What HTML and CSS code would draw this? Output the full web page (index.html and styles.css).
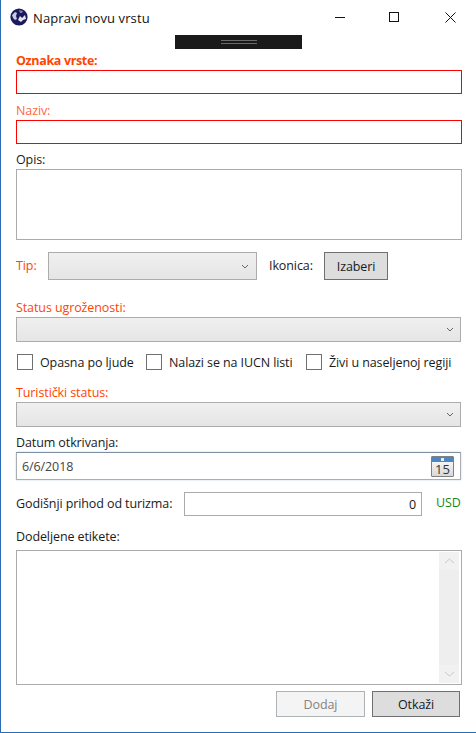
FILE: index.html
```html
<!DOCTYPE html>
<html>
<head lang="en">
    <meta charset="UTF-8">
    <title>Napravi novu vrstu</title>
    <link rel="stylesheet" href="styles.css">
</head>
<body>
<div id="window">
    <div id="titlebar">
        <svg class="app-icon" width="18" height="18" viewBox="0 0 18 18">
            <circle cx="9" cy="9" r="8.6" fill="#1b1a5e"/>
            <path d="M2 7 L5 4 L7 5 L6 8 L7 11 L5 12 L3 10 Z" fill="#c9c9e0"/>
            <path d="M8 12 L10 8 L12 10 L15 7 L16 11 L13 12 L11 14 Z" fill="#e6e6f2"/>
            <path d="M9 2 L13 3 L12 5 L10 5 Z" fill="#7f7fb5"/>
        </svg>
        <span class="title">Napravi novu vrstu</span>
        <div class="win-buttons">
            <svg class="w-min" width="11" height="11" viewBox="0 0 11 11"><path d="M0 5.5 H10" stroke="#111" fill="none"/></svg>
            <svg class="w-max" width="11" height="11" viewBox="0 0 11 11"><rect x="0.5" y="0.5" width="9" height="9" stroke="#111" fill="none"/></svg>
            <svg width="11" height="11" viewBox="0 0 11 11"><path d="M0.5 0.5 L10.5 10.5 M10.5 0.5 L0.5 10.5" stroke="#111" fill="none"/></svg>
        </div>
    </div>
    <div id="grip"><span class="grip-lines"></span></div>
    <div id="form">
        <label class="lbl req strong lbl-first">Oznaka vrste:</label>
        <input class="field invalid" type="text">
        <label class="lbl faded">Naziv:</label>
        <input class="field invalid" type="text">
        <label class="lbl opis-lbl">Opis:</label>
        <textarea class="field opis"></textarea>

        <div class="row tip-row">
            <label class="lbl-inline req tip-lbl">Tip:</label>
            <div class="combo tip-combo"><svg class="chev" width="8" height="5" viewBox="0 0 8 5"><path d="M1 1 L4 4 L7 1" stroke="#666" fill="none"/></svg></div>
            <label class="lbl-inline ikonica">Ikonica:</label>
            <button class="btn izaberi">Izaberi</button>
        </div>

        <label class="lbl req status-lbl">Status ugroženosti:</label>
        <div class="combo wide"><svg class="chev" width="8" height="5" viewBox="0 0 8 5"><path d="M1 1 L4 4 L7 1" stroke="#666" fill="none"/></svg></div>

        <div class="row checks">
            <span class="check"></span><span class="check-text c1">Opasna po ljude</span>
            <span class="check"></span><span class="check-text c2">Nalazi se na IUCN listi</span>
            <span class="check"></span><span class="check-text">Živi u naseljenoj regiji</span>
        </div>

        <label class="lbl req tur-lbl">Turistički status:</label>
        <div class="combo wide"><svg class="chev" width="8" height="5" viewBox="0 0 8 5"><path d="M1 1 L4 4 L7 1" stroke="#666" fill="none"/></svg></div>

        <label class="lbl datum-lbl">Datum otkrivanja:</label>
        <div class="datepicker">
            <span class="date-val">6/6/2018</span>
            <div class="cal">
                <div class="cal-top"><span class="cal-dot"></span></div>
                <div class="cal-num">15</div>
            </div>
        </div>

        <div class="row prihod">
            <label class="lbl-inline">Godišnji prihod od turizma:</label>
            <div class="num-field">0</div>
            <span class="usd">USD</span>
        </div>

        <label class="lbl etikete-lbl">Dodeljene etikete:</label>
        <div class="listbox">
            <div class="scrollbar">
                <div class="sb-arrow"><svg width="11" height="6" viewBox="0 0 11 6"><path d="M1 5 L5.5 1 L10 5" stroke="#c8c8c8" fill="none"/></svg></div>
                <div class="sb-arrow"><svg width="11" height="6" viewBox="0 0 11 6"><path d="M1 1 L5.5 5 L10 1" stroke="#c8c8c8" fill="none"/></svg></div>
            </div>
        </div>

        <div class="row actions">
            <button class="btn action disabled">Dodaj</button>
            <button class="btn action cancel">Otkaži</button>
        </div>
    </div>
</div>
</body>
</html>
```

FILE: styles.css
```css
*{
    margin: 0;
    padding: 0;
    box-sizing: border-box;
}
html, body{
    background: #fff;
}
body{
    width: 476px;
    height: 733px;
    overflow: hidden;
    font-family: "Open Sans", "Noto Sans", sans-serif;
    font-size: 12.5px;
    letter-spacing: -0.1px;
    color: #1a1a1a;
}
#window{
    height: 733px;
    border-left: 1px solid #2a6db5;
    border-bottom: 1px solid #2a6db5;
    background: #fff;
}
#titlebar{
    height: 35px;
    display: flex;
    align-items: center;
    padding-left: 9px;
}
.app-icon{
    margin-right: 5px;
    margin-bottom: 1px;
}
.title{
    font-size: 13px;
    letter-spacing: 0.1px;
    color: #111;
}
.win-buttons{
    margin-left: auto;
    display: flex;
    padding-right: 20px;
}
.w-min{
    margin-right: 43px;
}
.w-max{
    margin-right: 45px;
}
#grip{
    width: 127px;
    height: 14px;
    margin-left: 174px;
    background: #1a1a1a;
    display: flex;
    align-items: center;
    justify-content: center;
}
.grip-lines{
    width: 36px;
    height: 4px;
    border-top: 1px solid #6a6a6a;
    border-bottom: 1px solid #6a6a6a;
}
#form{
    padding-left: 15px;
    width: 461px;
    display: flex;
    flex-direction: column;
}
.lbl{
    display: block;
    height: 16px;
    line-height: 16px;
    margin-top: 3px;
    margin-bottom: 1px;
}
.lbl-first{
    margin-top: 4px;
}
.opis-lbl{
    margin-top: 2px;
}
.req{
    color: #ff4500;
}
.strong{
    font-weight: 700;
    letter-spacing: -0.35px;
}
.faded{
    color: #ff6545;
}
.field{
    display: block;
    width: 446px;
    height: 24px;
    border: 1px solid #ababab;
    background: #fff;
    outline: none;
    resize: none;
    margin-bottom: 6px;
}
.invalid{
    border-color: #ff0000;
}
.opis{
    height: 71px;
    margin-bottom: 12px;
}
.row{
    display: flex;
    align-items: center;
}
.tip-row{
    height: 28px;
}
.tip-lbl{
    width: 32px;
}
.lbl-inline{
    line-height: 16px;
}
.combo{
    height: 25px;
    border: 1px solid #acacac;
    background: linear-gradient(#f0f0f0, #e5e5e5);
    display: flex;
    align-items: center;
    justify-content: flex-end;
    padding-right: 6px;
}
.tip-combo{
    width: 209px;
    height: 28px;
    padding-right: 7px;
}
.wide{
    width: 445px;
}
.ikonica{
    margin-left: 12px;
    width: 55px;
}
.btn{
    font-family: "Open Sans", "Noto Sans", sans-serif;
    font-size: 12.5px;
    letter-spacing: -0.1px;
    color: #1a1a1a;
    background: #dddddd;
    border: 1px solid #707070;
}
.izaberi{
    width: 64px;
    height: 28px;
}
.status-lbl{
    margin-top: 20px;
}
.checks{
    margin-top: 12px;
    margin-left: 1px;
    height: 16px;
}
.check{
    width: 16px;
    height: 16px;
    border: 1px solid #707070;
    background: #fff;
    margin-right: 7px;
}
.check-text.c1{
    width: 106px;
}
.check-text.c2{
    width: 137px;
}
.tur-lbl{
    margin-top: 15px;
}
.datum-lbl{
    margin-top: 8px;
}
.datepicker{
    width: 445px;
    height: 28px;
    border: 1px solid #abadb3;
    border-top-color: #7b8ea3;
    box-shadow: 0 0 2px #c6d6e6;
    display: flex;
    align-items: center;
    justify-content: space-between;
    padding: 0 6px 0 5px;
    margin-bottom: 12px;
    color: #444;
}
.cal{
    width: 23px;
    height: 21px;
    border: 1px solid #808080;
    border-radius: 1px;
    background: linear-gradient(#fff, #d8d8d8);
}
.cal-top{
    height: 5px;
    background: #4a86c8;
    display: flex;
    align-items: center;
    justify-content: center;
}
.cal-dot{
    width: 3px;
    height: 3px;
    background: #e8f0f8;
}
.cal-num{
    font-size: 13px;
    line-height: 14px;
    letter-spacing: 0;
    text-align: center;
    color: #333;
}
.prihod{
    height: 24px;
}
.prihod .lbl-inline{
    width: 168px;
}
.num-field{
    width: 238px;
    height: 24px;
    border: 1px solid #ababab;
    line-height: 24px;
    text-align: right;
    padding-right: 5px;
}
.usd{
    margin-left: 14px;
    margin-top: -3px;
    color: #168a16;
}
.etikete-lbl{
    margin-top: 13px;
    margin-bottom: 5px;
}
.listbox{
    width: 446px;
    height: 135px;
    border: 1px solid #ababab;
    display: flex;
    justify-content: flex-end;
    padding: 1px 2px 1px 0;
}
.scrollbar{
    width: 20px;
    background: #eeeeee;
    display: flex;
    flex-direction: column;
    justify-content: space-between;
}
.sb-arrow{
    height: 18px;
    background: #f1f1f1;
    display: flex;
    align-items: center;
    justify-content: center;
}
.actions{
    justify-content: flex-end;
    gap: 7px;
    margin-top: 6px;
    padding-right: 2px;
}
.action{
    width: 89px;
    height: 26px;
}
.cancel{
    width: 88px;
}
.disabled{
    background: #f4f4f4;
    border-color: #adb2b5;
    color: #838383;
}
```
